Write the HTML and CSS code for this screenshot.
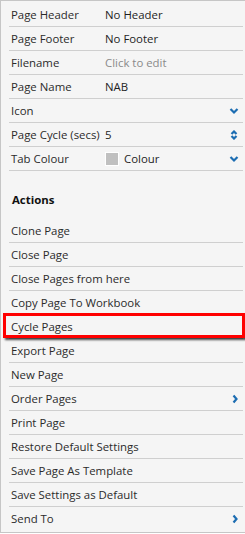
FILE: index.html
```html
<!DOCTYPE html>
<html lang="en">
<head>
  <meta charset="UTF-8">
  <meta name="viewport" content="width=device-width, initial-scale=1.0">
  <title>Page Settings</title>
  <link rel="stylesheet" href="styles.css">
</head>
<body>
  <div class="panel">
    <div class="row">
      <span class="label">Page Header</span>
      <span class="value">No Header</span>
    </div>
    <div class="row">
      <span class="label">Page Footer</span>
      <span class="value">No Footer</span>
    </div>
    <div class="row">
      <span class="label">Filename</span>
      <span class="value placeholder">Click to edit</span>
    </div>
    <div class="row">
      <span class="label">Page Name</span>
      <span class="value">NAB</span>
    </div>
    <div class="row">
      <span class="label">Icon</span>
      <span class="value"></span>
      <svg class="icon" width="10" height="8" viewBox="0 0 10 8"><path d="M1.5 2 L5 5.5 L8.5 2" /></svg>
    </div>
    <div class="row">
      <span class="label">Page Cycle (secs)</span>
      <span class="value">5</span>
      <svg class="icon" width="10" height="10" viewBox="0 0 10 10"><path d="M2.5 4 L5 1.5 L7.5 4 M2.5 6 L5 8.5 L7.5 6" /></svg>
    </div>
    <div class="row">
      <span class="label">Tab Colour</span>
      <span class="value"><span class="swatch"></span>Colour</span>
      <svg class="icon" width="10" height="8" viewBox="0 0 10 8"><path d="M1.5 2 L5 5.5 L8.5 2" /></svg>
    </div>

    <div class="heading">Actions</div>

    <div class="row">Clone Page</div>
    <div class="row">Close Page</div>
    <div class="row">Close Pages from here</div>
    <div class="row">Copy Page To Workbook</div>
    <div class="row selected">Cycle Pages<span class="highlight"></span></div>
    <div class="row">Export Page</div>
    <div class="row">New Page</div>
    <div class="row">
      <span class="label">Order Pages</span>
      <span class="value"></span>
      <svg class="icon" width="8" height="10" viewBox="0 0 8 10"><path d="M2.5 1.5 L5.5 5 L2.5 8.5" /></svg>
    </div>
    <div class="row">Print Page</div>
    <div class="row">Restore Default Settings</div>
    <div class="row">Save Page As Template</div>
    <div class="row">Save Settings as Default</div>
    <div class="row last">
      <span class="label">Send To</span>
      <span class="value"></span>
      <svg class="icon" width="8" height="10" viewBox="0 0 8 10"><path d="M2.5 1.5 L5.5 5 L2.5 8.5" /></svg>
    </div>
  </div>
</body>
</html>
```

FILE: styles.css
```css
body {
  margin: 0;
  background-color: #ffffff;
  font-family: "Open Sans", "Noto Sans", sans-serif;
  font-size: 11.4px;
  color: #2b2b2b;
}
.panel {
  width: 234px;
  padding: 2px 6px 2px 8px;
  background-color: #f5f5f5;
  border: 1px solid #c6c6c6;
}
.row {
  position: relative;
  display: grid;
  grid-template-columns: 94px 1fr auto;
  align-items: center;
  height: 23px;
  padding-left: 2px;
  padding-right: 4px;
  border-bottom: 1px solid #cfcfcf;
  line-height: 23px;
  white-space: nowrap;
}
.row.last {
  border-bottom: none;
}
.value {
  display: flex;
  align-items: center;
  color: #1e1e1e;
}
.placeholder {
  color: #8a8a8a;
}
.swatch {
  width: 12px;
  height: 12px;
  margin-right: 5px;
  background-color: #c0c0c0;
  border: 1px solid #ffffff;
}
.icon {
  fill: none;
  stroke: #1c6db2;
  stroke-width: 2.2;
  stroke-linecap: butt;
}
.heading {
  padding: 17px 0 7px 3px;
  line-height: 24px;
  font-weight: bold;
  color: #111111;
}
.highlight {
  position: absolute;
  top: -2px;
  left: -6px;
  right: -2px;
  bottom: 0;
  border: 3px solid #ff0000;
  box-shadow: 2px 2px 2px rgba(0, 0, 0, 0.7);
}
```
